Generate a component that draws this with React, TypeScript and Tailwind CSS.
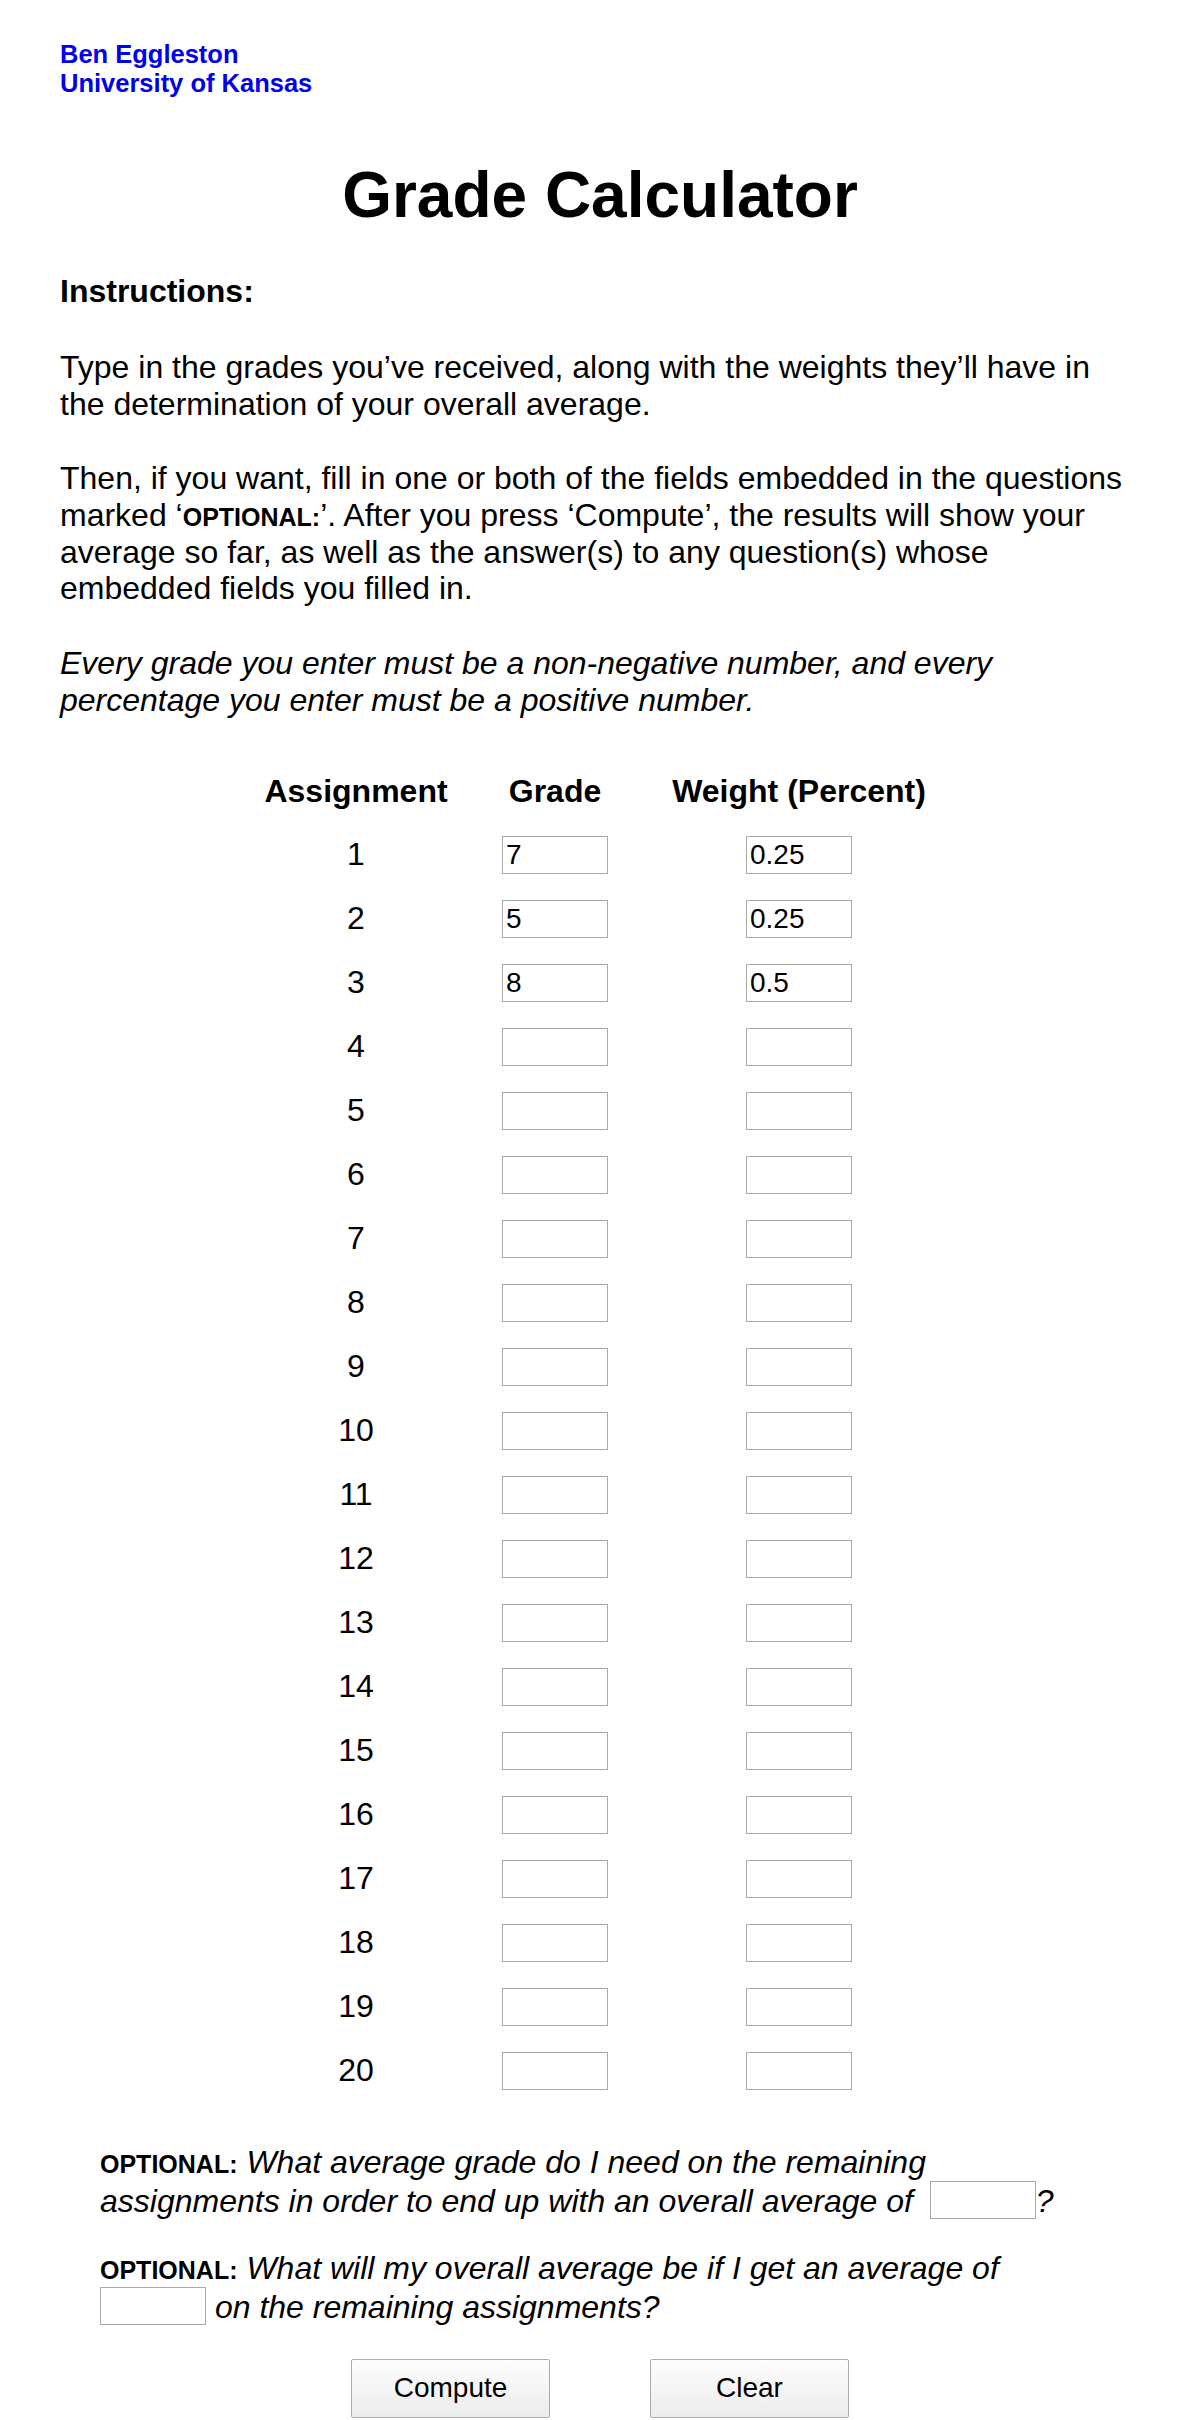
import React from 'react';

const rows = Array.from({ length: 20 }, (_, i) => i + 1);
const filled: Record<number, { grade: string; weight: string }> = {
  1: { grade: '7', weight: '0.25' },
  2: { grade: '5', weight: '0.25' },
  3: { grade: '8', weight: '0.5' },
};

const base =
  "w-[106px] h-[38px] border border-[#a9a9a9] bg-white px-[3px] text-[28px] text-black outline-none font-['Liberation_Sans',Arial,sans-serif]";

const Field = ({ value = '', className = '' }: { value?: string; className?: string }) => (
  <input type="text" defaultValue={value} className={`${base} ${className}`} />
);

const Optional = () => (
  <span className="font-bold not-italic text-[25px] uppercase">Optional:</span>
);

export default function App() {
  return (
    <div className="min-h-[2420px] bg-white text-black font-['Liberation_Sans',Arial,sans-serif] text-[32px] leading-[1.15] px-[60px] pt-[40px] pb-[8px]">
      {/* Author */}
      <div className="text-[25.5px] leading-[28.5px] font-bold text-[#0000ee]">
        <div>Ben Eggleston</div>
        <div>University of Kansas</div>
      </div>

      <h1 className="mt-[62px] text-center text-[64px] font-bold leading-[1.15]">Grade Calculator</h1>

      <h4 className="mt-[40px] font-bold">Instructions:</h4>

      <p className="mt-[40px]">
        Type in the grades you’ve received, along with the weights they’ll have in the determination of your overall
        average.
      </p>
      <p className="mt-[37px]">
        Then, if you want, fill in one or both of the fields embedded in the questions marked ‘<Optional />’. After you
        press ‘Compute’, the results will show your average so far, as well as the answer(s) to any question(s) whose
        embedded fields you filled in.
      </p>
      <p className="mt-[38px] italic">
        Every grade you enter must be a non-negative number, and every percentage you enter must be a positive number.
      </p>

      {/* Table */}
      <div className="mt-[41px] mx-auto w-[670px] grid grid-cols-[182px_216px_272px]">
        <div className="h-[63px] flex items-center justify-center font-bold">Assignment</div>
        <div className="h-[63px] flex items-center justify-center font-bold">Grade</div>
        <div className="h-[63px] flex items-center justify-center font-bold">Weight (Percent)</div>
        {rows.map((n) => (
          <React.Fragment key={n}>
            <div className="h-[64px] flex items-center justify-center">{n}</div>
            <div className="h-[64px] flex items-center justify-center">
              <Field value={filled[n]?.grade} />
            </div>
            <div className="h-[64px] flex items-center justify-center">
              <Field value={filled[n]?.weight} />
            </div>
          </React.Fragment>
        ))}
      </div>

      {/* Optional questions */}
      <div className="mt-[41px] ml-[40px] w-[975px]">
        <p className="leading-[37px]">
          <Optional /> <span className="italic">What average grade do I need on the remaining assignments in order to end up with an overall average of</span>{' '}
          <Field className="align-middle -mt-[7px] -mb-[1px] ml-[8px]" />
          <span className="italic">?</span>
        </p>
        <p className="mt-[30px] leading-[37px]">
          <Optional /> <span className="italic">What will my overall average be if I get an average of</span>{' '}
          <Field className="align-middle -mt-[7px] -mb-[1px]" />{' '}
          <span className="italic">on the remaining assignments?</span>
        </p>
      </div>

      <div className="mt-[33px] flex justify-center gap-[100px]">
        <button className="w-[199px] h-[59px] border border-[#adadad] rounded-[2px] bg-gradient-to-b from-[#fdfdfd] to-[#ececec] text-[28px]">
          Compute
        </button>
        <button className="w-[199px] h-[59px] border border-[#adadad] rounded-[2px] bg-gradient-to-b from-[#fdfdfd] to-[#ececec] text-[28px]">
          Clear
        </button>
      </div>
    </div>
  );
}
